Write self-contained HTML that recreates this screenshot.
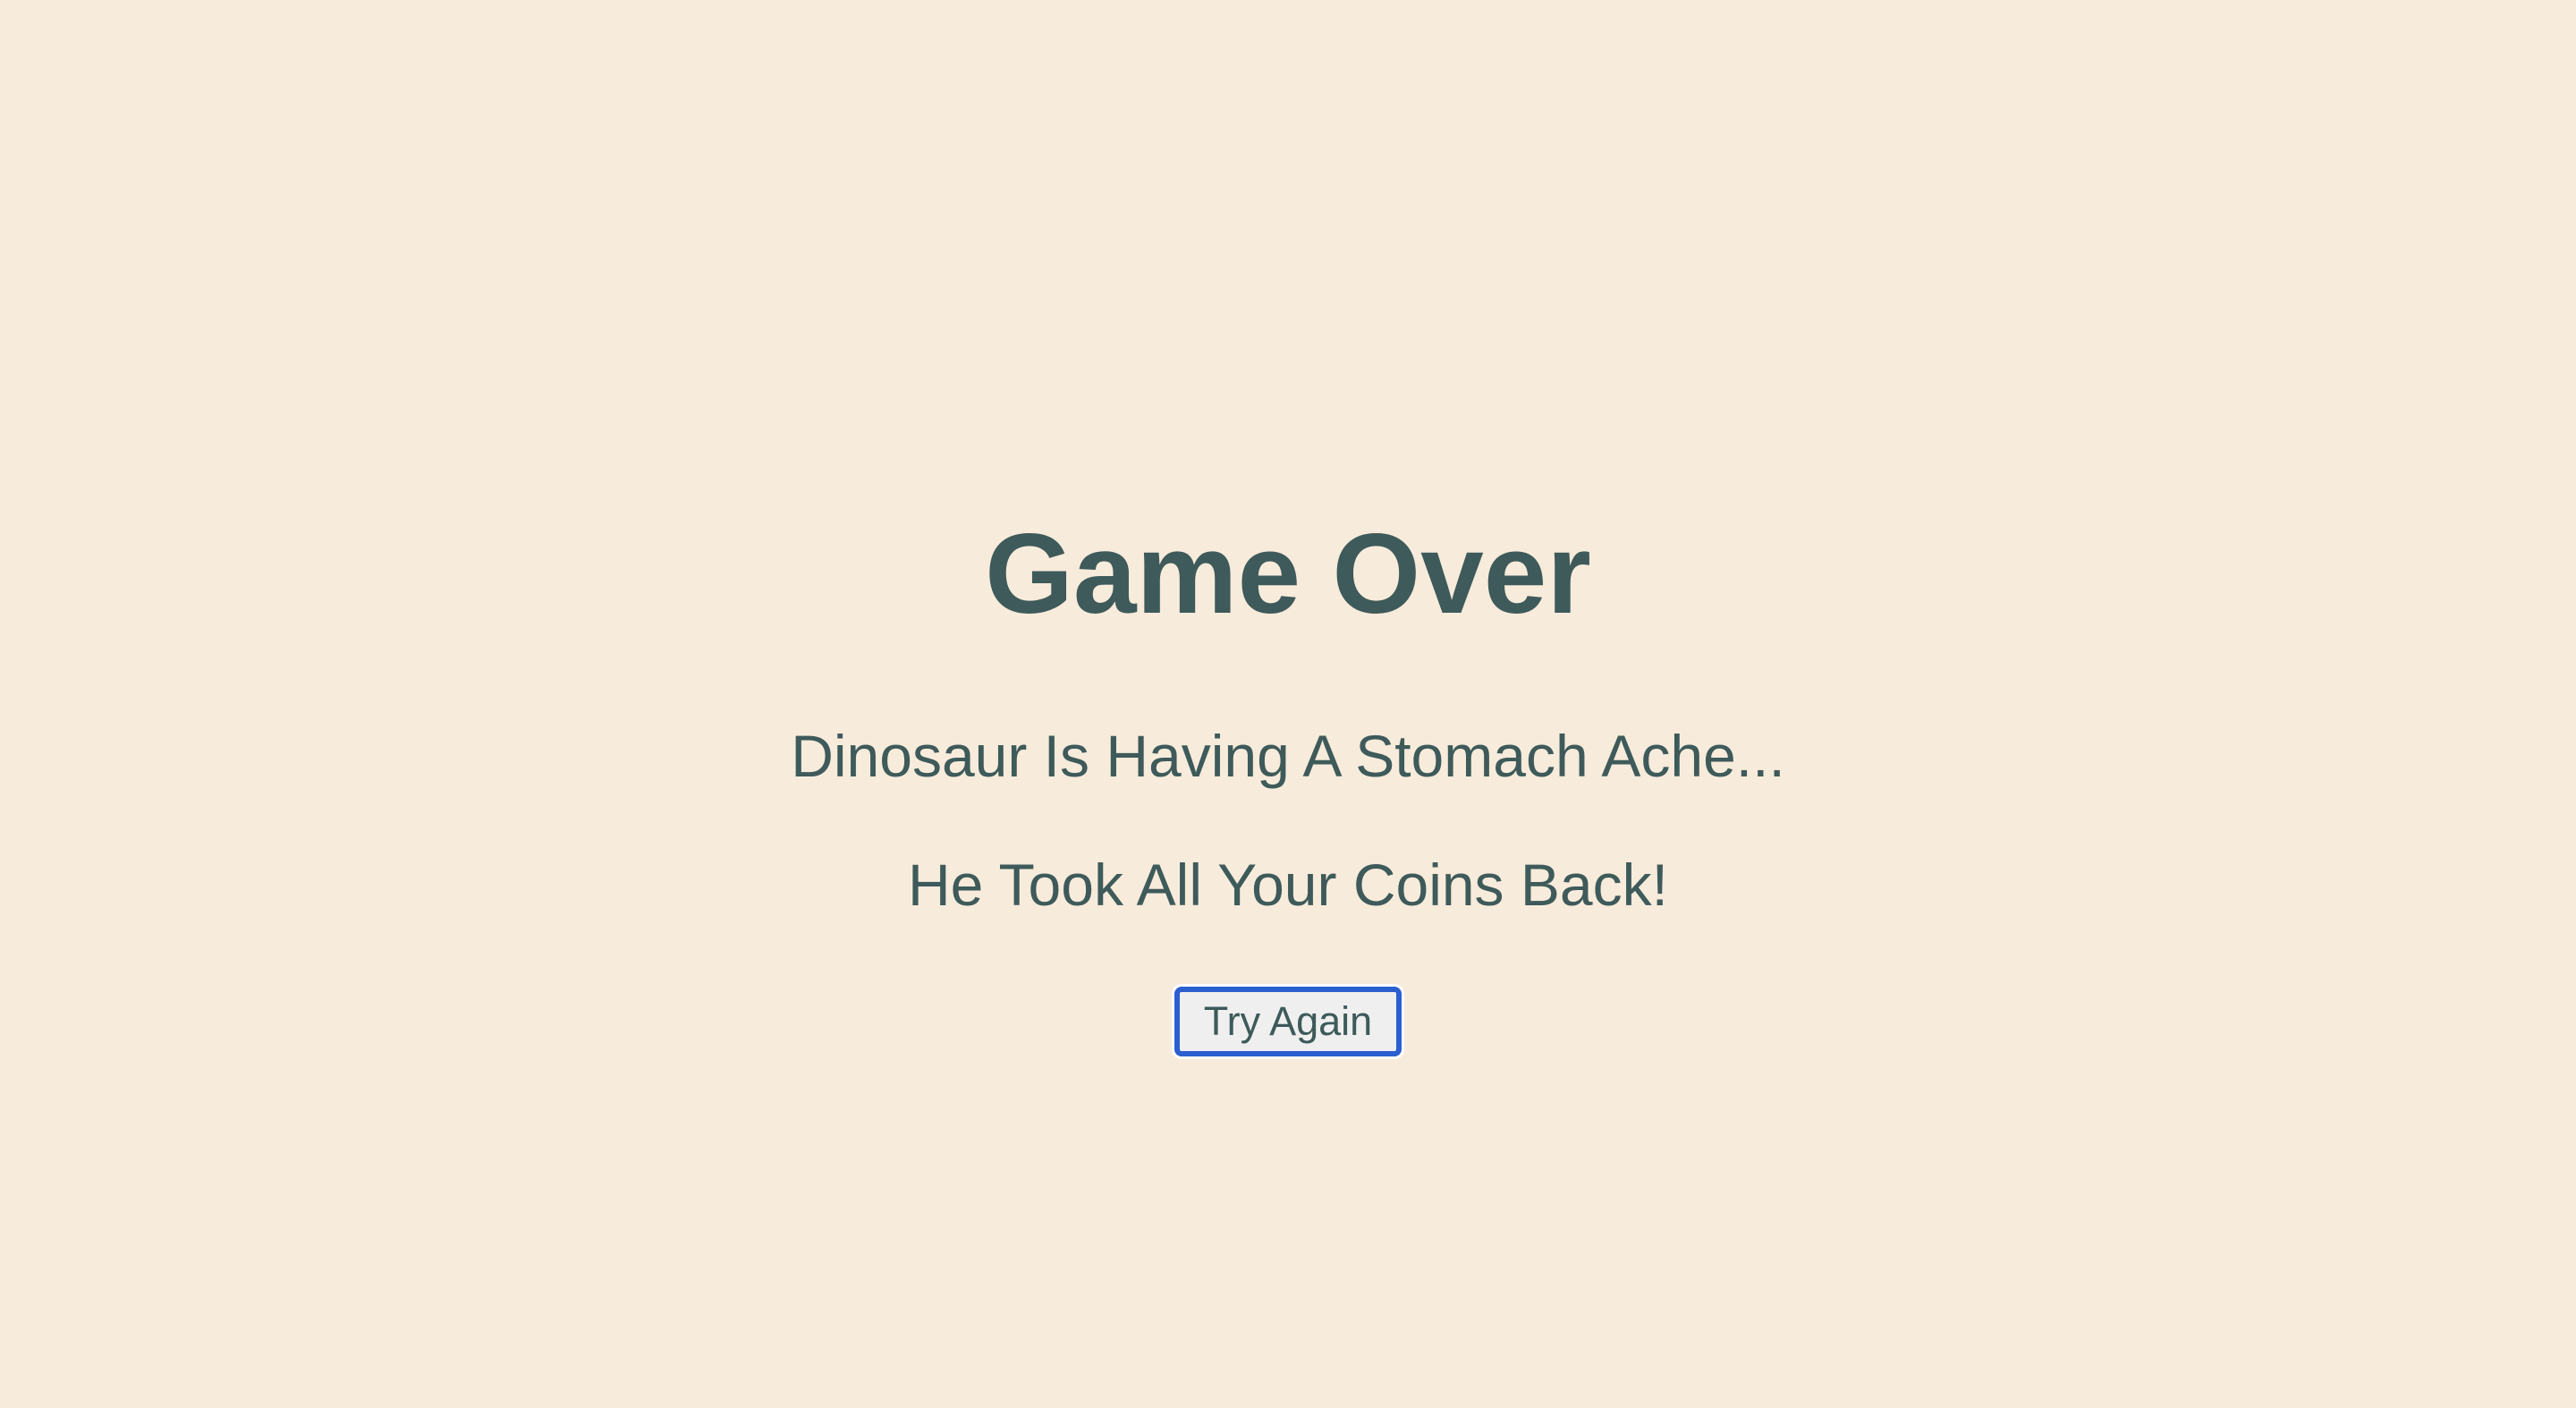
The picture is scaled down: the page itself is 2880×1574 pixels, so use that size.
<!DOCTYPE html>
<html><head><meta charset="utf-8"><style>
html,body{margin:0;padding:0;width:2880px;height:1574px;background:#f7ebdb;overflow:hidden;font-family:"Liberation Sans",sans-serif;color:#3e5a5a}
.t{position:absolute;left:0;width:2880px;text-align:center;white-space:nowrap;line-height:1}
.btn{position:absolute;left:1313px;top:1103px;width:242px;height:66px;border:6px solid #2b5fd0;border-radius:8px;background:#efefef;box-shadow:0 0 0 3px #fff}
.btn span{position:absolute;left:0;width:100%;top:10px;text-align:center;font-size:45px;line-height:1;color:#3e5a5a}
</style></head><body>
<div class="t" style="top:578px;font-size:127px;font-weight:bold;">Game Over</div>
<div class="t" style="top:812px;font-size:66px;">Dinosaur Is Having A Stomach Ache...</div>
<div class="t" style="top:956px;font-size:66px;">He Took All Your Coins Back!</div>
<div class="btn"><span>Try Again</span></div>
</body></html>
